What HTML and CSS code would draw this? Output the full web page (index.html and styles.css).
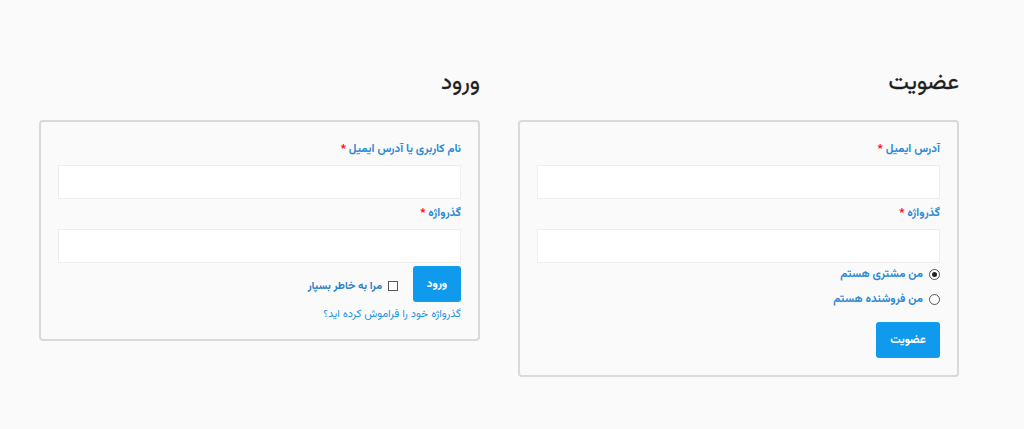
FILE: index.html
```html
<!DOCTYPE html>
<html lang="fa" dir="rtl">
<head>
<meta charset="utf-8">
<title>حساب کاربری</title>
<link rel="stylesheet" href="styles.css">
</head>
<body>
<div class="account">
  <section class="col">
    <h2 class="col-title">عضویت</h2>
    <form class="box box-register">
      <label class="field-label">آدرس ایمیل <span class="req">*</span></label>
      <input class="field" type="email">
      <label class="field-label field-label-2">گذرواژه <span class="req">*</span></label>
      <input class="field" type="password">
      <label class="radio-row first"><span class="radio checked"></span><span class="radio-text">من مشتری هستم</span></label>
      <label class="radio-row"><span class="radio"></span><span class="radio-text">من فروشنده هستم</span></label>
      <button type="button" class="btn btn-register">عضویت</button>
    </form>
  </section>
  <section class="col">
    <h2 class="col-title">ورود</h2>
    <form class="box box-login">
      <label class="field-label">نام کاربری یا آدرس ایمیل <span class="req">*</span></label>
      <input class="field" type="text">
      <label class="field-label field-label-2">گذرواژه <span class="req">*</span></label>
      <input class="field" type="password">
      <div class="login-row">
        <button type="button" class="btn btn-login">ورود</button>
        <label class="remember"><span class="check"></span><span class="remember-text">مرا به خاطر بسپار</span></label>
      </div>
      <a class="lost" href="#">گذرواژه خود را فراموش کرده اید؟</a>
    </form>
  </section>
</div>
</body>
</html>
```
FILE: styles.css
```css
* { box-sizing: border-box; }
html, body { margin: 0; padding: 0; }
body {
  background: #fafafa;
  font-family: "Vazirmatn", "Noto Sans Arabic", "DejaVu Sans", sans-serif;
  color: #222;
  height: 429px;
  overflow: hidden;
}
.account {
  display: flex;
  gap: 38px;
  margin: 0 65px 0 39px;
  align-items: flex-start;
}
.col { flex: 1 1 0; }
.col-title {
  font-size: 23px;
  font-weight: normal;
  line-height: 30px;
  margin: 68px 0 22px;
  color: #1e1e1e;
  -webkit-text-stroke: 0.3px #1e1e1e;
}
.box {
  border: 2px solid #d9d9d9;
  border-radius: 4px;
  background: #fafafa;
  padding: 17px 17px 17px;
  display: flex;
  flex-direction: column;
  align-items: stretch;
}
.box-login { padding-bottom: 14px; }
.field-label {
  display: block;
  font-size: 11.5px;
  font-weight: bold;
  line-height: 20px;
  color: #2b8ad5;
  margin-bottom: 6px;
}
.field-label-2 { margin-top: 4px; }
.req { color: #f00; }
.field {
  display: block;
  width: 100%;
  height: 34px;
  border: 1px solid #eeeeee;
  background: #fff;
  margin: 0;
}
.radio-row {
  display: flex;
  align-items: center;
  height: 20px;
  margin-top: 5px;
  gap: 6px;
}
.radio-row.first { margin-top: 1px; }
.radio {
  width: 11px; height: 11px;
  border: 1px solid #555;
  border-radius: 50%;
  background: #fff;
  position: relative;
  flex: none;
}
.radio.checked::after {
  content: "";
  position: absolute;
  left: 2px; top: 2px;
  width: 5px; height: 5px;
  border-radius: 50%;
  background: #222;
}
.radio-text, .remember-text {
  font-size: 11.5px;
  font-weight: bold;
  color: #2b8ad5;
}
.btn {
  border: 0;
  border-radius: 3px;
  background: #0f9aee;
  color: #fff;
  font-family: inherit;
  font-size: 11.5px;
  font-weight: bold;
  height: 36px;
  padding: 0;
}
.btn-register { width: 64px; margin-top: 13px; align-self: flex-start; }
.login-row {
  display: flex;
  align-items: center;
  margin-top: 3px;
  gap: 15px;
}
.btn-login { width: 48px; }
.remember {
  display: flex;
  align-items: center;
  gap: 6px;
  margin-top: 4px;
}
.remember-text { font-size: 10.8px; color: #2a80c8; }
.check {
  width: 10px; height: 10px;
  border: 1px solid #555;
  background: #fff;
  flex: none;
}
.lost {
  display: block;
  font-size: 11px;
  line-height: 20px;
  margin-top: 3px;
  color: #1a96e2;
  text-decoration: none;
}
```
